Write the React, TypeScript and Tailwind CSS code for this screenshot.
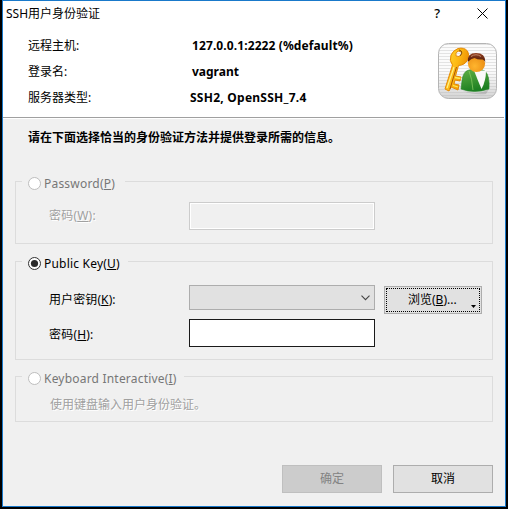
import type { ReactNode } from 'react';

function Radio({ checked = false }: { checked?: boolean }) {
  return (
    <svg width="13" height="13" viewBox="0 0 13 13" className="shrink-0">
      <circle cx="6.5" cy="6.5" r="6" fill="#fff" stroke={checked ? '#333' : '#bdbdbd'} />
      {checked && <circle cx="6.5" cy="6.5" r="3.6" fill="#2b2b2b" />}
    </svg>
  );
}

function Group({
  legend,
  legendClass,
  checked,
  className,
  children,
}: {
  legend: ReactNode;
  legendClass: string;
  checked?: boolean;
  className: string;
  children: ReactNode;
}) {
  return (
    <fieldset className={`min-w-0 border border-[#dcdcdc] ${className}`}>
      <legend className={`ml-1.5 flex h-[17px] items-end gap-[3px] pl-1.5 whitespace-nowrap ${legendClass}`}>
        <Radio checked={checked} />
        <span className="h-[13px] leading-[13px] tracking-[0.2px]">{legend}</span>
      </legend>
      {children}
    </fieldset>
  );
}

function KeyUserIcon() {
  return (
    <svg width="59" height="56" viewBox="0 0 59 56">
      <defs>
        <pattern id="lines" width="4" height="3" patternUnits="userSpaceOnUse">
          <rect width="4" height="3" fill="#fbfbfb" />
          <rect width="4" height="1" y="1" fill="#e3e3e3" />
        </pattern>
        <linearGradient id="shade" x1="0" y1="0" x2="0" y2="1">
          <stop offset="0.5" stopColor="#bbb" stopOpacity="0" />
          <stop offset="1" stopColor="#aaa" stopOpacity="0.5" />
        </linearGradient>
        <linearGradient id="gold" x1="0" y1="0" x2="1" y2="0.5">
          <stop offset="0" stopColor="#ffdc3a" />
          <stop offset="0.55" stopColor="#fdb813" />
          <stop offset="1" stopColor="#e98500" />
        </linearGradient>
        <radialGradient id="face" cx="0.4" cy="0.65" r="0.7">
          <stop offset="0" stopColor="#ffb52e" />
          <stop offset="1" stopColor="#e98a12" />
        </radialGradient>
        <linearGradient id="coat" x1="0" y1="0" x2="0.3" y2="1">
          <stop offset="0" stopColor="#63b246" />
          <stop offset="1" stopColor="#1d7f22" />
        </linearGradient>
        <linearGradient id="hair" x1="0" y1="0" x2="0" y2="1">
          <stop offset="0" stopColor="#964021" />
          <stop offset="1" stopColor="#4a1a08" />
        </linearGradient>
      </defs>
      <rect x="0.5" y="0.5" width="58" height="55" rx="10" fill="url(#lines)" />
      <rect x="0.5" y="0.5" width="58" height="55" rx="10" fill="url(#shade)" stroke="#b4b4b4" />
      <path d="M25 48 Q40 53 51 46 L48 51 Q35 52 25 48Z" fill="#777" opacity="0.3" />
      <path
        fillRule="evenodd"
        d="M20 5.5 Q26 4 29.5 8 Q32 12 29.5 17 Q27 22 20.5 22.5 L17.5 33 L23 34 L22 38 L17 37 L16 41 L21 42 L20 47 L13 44 L11 48 L7 46 L14.5 22 Q11 18 13 12 Q15 7.5 20 5.5Z M20 8 Q17 10 18 13 Q21 15 24 11 Q24 8 20 8Z"
        fill="url(#gold)"
        stroke="#e58a05"
        strokeWidth="1"
      />
      <path d="M16 24 L9 45" stroke="#fff087" strokeWidth="1.2" />
      <path d="M18.5 24 L12 46" stroke="#a95507" strokeWidth="1" />
      <path d="M21 7 Q26 8 22 13" fill="none" stroke="#81500c" strokeWidth="1" />
      <path d="M17 34.5 L22.5 35.5 M15 42.5 L20 44" stroke="#ffec56" strokeWidth="1.3" />
      <path
        d="M31 27 Q25 28 24 38 L23 46 Q36 51 51 46 Q52 33 47 28 Q42 25 36 26Z"
        fill="url(#coat)"
        stroke="#26862a"
        strokeWidth="0.6"
      />
      <path d="M36 27.5 L48 27.5 Q48 38 43.5 46 Q40 38 36 27.5Z" fill="#fafafa" />
      <path d="M31 28 Q34 35 35 47" fill="none" stroke="#83c860" strokeWidth="0.8" />
      <circle cx="38.5" cy="20.5" r="8.6" fill="url(#face)" />
      <path d="M29.8 19 Q29 10 38 10 Q47.5 10 47.3 19 Q46.5 17 44.5 16.5 Q40 17 36.5 15 Q33 15.5 29.8 19Z" fill="url(#hair)" />
      <path d="M33 13.5 Q38 10 43 13.5" fill="none" stroke="#c28668" strokeWidth="1" />
    </svg>
  );
}

export default function App() {
  return (
    <div className="h-[509px] w-[508px] bg-black pl-0.5 font-['Noto_Sans','Noto_Sans_CJK_SC',sans-serif] text-xs text-black">
      <div className="flex h-[507px] w-[504px] flex-col border border-[#1979ca] bg-[#f0f0f0] whitespace-nowrap">
        <header className="h-[118px] shrink-0 border-b border-white bg-white">
          <div className="mr-px h-[117px] border-b border-[#a0a0a0]">
            <div className="flex h-[25px] items-center pl-[3px]">
              <h1 className="grow leading-[25px]">SSH用户身份验证</h1>
              <span className="mr-[37px] text-[13px] font-medium">?</span>
              <svg width="11" height="11" viewBox="0 0 11 11" className="mr-4 mb-px">
                <path d="M0.5 0.5 L10.5 10.5 M10.5 0.5 L0.5 10.5" stroke="#000" />
              </svg>
            </div>
            <div className="flex pt-[7px] pl-[25px]">
              <dl className="grid grow grid-cols-[162px_1fr] leading-[26px]">
                <dt>远程主机:</dt>
                <dd className="pl-0.5 font-bold tracking-[0.1px]">127.0.0.1:2222 (%default%)</dd>
                <dt>登录名:</dt>
                <dd className="pl-0.5 font-bold">vagrant</dd>
                <dt>服务器类型:</dt>
                <dd className="font-bold tracking-[0.25px]">SSH2, OpenSSH_7.4</dd>
              </dl>
              <div className="mt-2.5 mr-[7px]">
                <KeyUserIcon />
              </div>
            </div>
          </div>
        </header>

        <main className="flex grow flex-col px-3">
          <p className="mt-2 h-[46px] pl-[13px] leading-[21px] font-bold">请在下面选择恰当的身份验证方法并提供登录所需的信息。</p>

          <Group
            legend={<>Password(<u>P</u>)</>}
            legendClass="w-[103px] text-[#777]"
            className="h-[71px]"
          >
            <div className="flex pt-3 pl-[33px]">
              <label className="w-[140px] leading-[27px] tracking-[0.2px] text-[#a0a0a0] [text-shadow:1px_1px_0_#fff]">
                密码(<u>W</u>):
              </label>
              <div className="h-7 w-[186px] border border-[#ccc] bg-[#f0f0f0] shadow-[inset_0_0_0_1px_#fff]" />
            </div>
          </Group>

          <Group
            checked
            legend={<>Public Key(<u>U</u>)</>}
            legendClass="w-[106px]"
            className="mt-[9px] h-[107px]"
          >
            <div className="flex pt-[15px] pl-[33px]">
              <label className="w-[140px] leading-[30px] tracking-[0.1px]">用户密钥(<u>K</u>):</label>
              <div className="flex h-[25px] w-[186px] items-center justify-end border border-[#adadad] bg-[#e1e1e1] pr-1">
                <svg width="9" height="6" viewBox="0 0 9 6">
                  <path d="M0.5 0.7 L4.5 4.7 L8.5 0.7" fill="none" stroke="#444" strokeWidth="1.1" />
                </svg>
              </div>
              <button className="mt-px ml-[9px] h-7 w-[98px] border border-[#adadad] bg-[#e1e1e1] p-px">
                <span className="flex h-full items-center border border-dotted border-black pl-[21px]">
                  <span className="grow text-left">浏览(<u>B</u>)...</span>
                  <svg width="5" height="3" viewBox="0 0 5 3" className="mt-3 mr-[3px]">
                    <path d="M0 0 H5 L2.5 3Z" fill="#000" />
                  </svg>
                </span>
              </button>
            </div>
            <div className="mt-1 flex pl-[33px]">
              <label className="w-[140px] leading-8 tracking-[0.2px]">密码(<u>H</u>):</label>
              <div className="h-7 w-[186px] border border-[#1a1a1a] bg-white" />
            </div>
          </Group>

          <Group
            legend={<>Keyboard Interactive(<u>I</u>)</>}
            legendClass="w-[162px] text-[#777]"
            className="mt-2 h-[54px]"
          >
            <p className="pt-[9px] pl-[34px] leading-[22px] text-[#a0a0a0] [text-shadow:1px_1px_0_#fff]">
              使用键盘输入用户身份验证。
            </p>
          </Group>

          <footer className="mt-[43px] flex justify-end gap-[11px]">
            <button className="h-7 w-[100px] border border-[#bfbfbf] bg-[#ccc] text-[#838383]">确定</button>
            <button className="h-7 w-[100px] border border-[#adadad] bg-[#e1e1e1]">取消</button>
          </footer>
        </main>
      </div>
    </div>
  );
}
